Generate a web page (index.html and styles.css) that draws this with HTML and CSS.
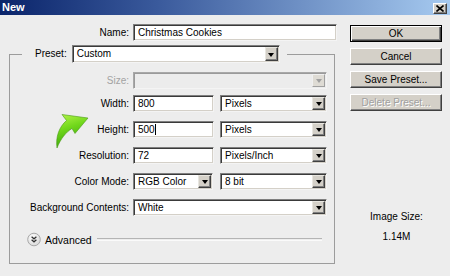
FILE: index.html
```html
<!DOCTYPE html>
<html>
<head>
<meta charset="utf-8">
<link rel="stylesheet" href="styles.css">
</head>
<body>
<div class="window">
  <div class="titlebar">
    <span class="title">New</span>
    <span class="close"><svg width="8" height="7" viewBox="0 0 8 7"><path d="M0.5 0.5 L7.5 6.5 M7.5 0.5 L0.5 6.5" stroke="#000" stroke-width="1.6"/></svg></span>
  </div>
  <div class="body">
    <div class="form">
      <div class="row name-row">
        <label class="lbl">Name:</label>
        <div class="input w-name">Christmas Cookies</div>
      </div>
      <fieldset class="group">
        <legend class="preset">
          <label class="preset-lbl">Preset:</label>
          <div class="select w-preset"><span class="val">Custom</span><span class="drop"><i class="tri"></i></span></div>
        </legend>
        <div class="row first">
          <label class="lbl off">Size:</label>
          <div class="select off w-full"><span class="val"></span><span class="drop"><i class="tri"></i></span></div>
        </div>
        <div class="row">
          <label class="lbl">Width:</label>
          <div class="pair">
            <div class="input w-num">800</div>
            <div class="select w-unit"><span class="val">Pixels</span><span class="drop"><i class="tri"></i></span></div>
          </div>
        </div>
        <div class="row">
          <label class="lbl">Height:</label>
          <div class="pair">
            <div class="input w-num">500<span class="caret"></span></div>
            <div class="select w-unit"><span class="val">Pixels</span><span class="drop"><i class="tri"></i></span></div>
          </div>
        </div>
        <div class="row">
          <label class="lbl">Resolution:</label>
          <div class="pair">
            <div class="input w-num">72</div>
            <div class="select w-unit"><span class="val">Pixels/Inch</span><span class="drop"><i class="tri"></i></span></div>
          </div>
        </div>
        <div class="row">
          <label class="lbl">Color Mode:</label>
          <div class="pair">
            <div class="select w-mode"><span class="val">RGB Color</span><span class="drop"><i class="tri"></i></span></div>
            <div class="select w-unit"><span class="val">8 bit</span><span class="drop"><i class="tri"></i></span></div>
          </div>
        </div>
        <div class="row">
          <label class="lbl">Background Contents:</label>
          <div class="select w-full"><span class="val">White</span><span class="drop"><i class="tri"></i></span></div>
        </div>
        <div class="advanced">
          <svg class="adv-icon" width="14" height="15" viewBox="0 0 14 15">
            <defs>
              <radialGradient id="ag" cx="0.4" cy="0.35" r="0.7">
                <stop offset="0" stop-color="#ffffff"/>
                <stop offset="1" stop-color="#d6d6d6"/>
              </radialGradient>
            </defs>
            <circle cx="7" cy="7.5" r="6.3" fill="url(#ag)" stroke="#a8a8a8" stroke-width="1"/>
            <path d="M4.6 4.8 L7 6.8 L9.4 4.8 M4.6 7.8 L7 9.8 L9.4 7.8" fill="none" stroke="#303030" stroke-width="1.3"/>
          </svg>
          <span class="adv-text">Advanced</span>
          <span class="rule"></span>
        </div>
      </fieldset>
    </div>
    <div class="side">
      <div class="btn default">OK</div>
      <div class="btn">Cancel</div>
      <div class="btn">Save Preset...</div>
      <div class="btn disabled">Delete Preset...</div>
      <div class="info">
        <div class="info-line">Image Size:</div>
        <div class="info-line">1.14M</div>
      </div>
    </div>
  </div>
  <svg class="arrow" width="46" height="42" viewBox="0 0 46 42">
    <defs>
      <linearGradient id="gg" x1="0" y1="0" x2="0.3" y2="1">
        <stop offset="0" stop-color="#b6f54a"/>
        <stop offset="0.45" stop-color="#72d81c"/>
        <stop offset="1" stop-color="#3aa50a"/>
      </linearGradient>
    </defs>
    <path d="M40 8 L14 4.5 L18.5 10.5 C11 17 7.5 27 9 38 C12.5 29 18 22 24 18.5 L27 23.5 Z" fill="url(#gg)" stroke="#4a9a18" stroke-width="0.6" stroke-linejoin="round"/>
  </svg>
</div>
</body>
</html>
```

FILE: styles.css
```css
html, body {
  margin: 0;
  padding: 0;
}
body {
  width: 450px;
  height: 276px;
  overflow: hidden;
  background: #ededed;
  font-family: "Liberation Sans", Arial, sans-serif;
  font-size: 10px;
  color: #000;
}
.window {
  position: relative;
  width: 450px;
  height: 276px;
  background: #ededed;
}
.titlebar {
  height: 15px;
  display: flex;
  align-items: center;
  justify-content: space-between;
  background: linear-gradient(to right, #0a246a 0%, #3a5a9c 35%, #a6caf0 100%);
  padding: 0 3px 0 2px;
  box-sizing: border-box;
}
.title {
  color: #fff;
  font-weight: bold;
  font-size: 11px;
  line-height: 15px;
}
.close {
  width: 14px;
  height: 11px;
  box-sizing: border-box;
  background: #d4d0c8;
  border: 1px solid;
  border-color: #fff #404040 #404040 #fff;
  box-shadow: inset -1px -1px 0 #808080;
  display: flex;
  align-items: center;
  justify-content: center;
  margin-top: 2px;
}
.close svg { display: block; }
.body {
  display: flex;
  align-items: flex-start;
}
.form {
  width: 335px;
}
.row {
  display: grid;
  grid-template-columns: 119px auto;
  column-gap: 4px;
  height: 17px;
  align-items: center;
  margin-top: 9px;
}
.row.first { margin-top: 0; }
.row.first + .row { margin-top: 6px; }
.name-row {
  grid-template-columns: 129px auto;
  margin-top: 9px;
}
.lbl {
  text-align: right;
  white-space: nowrap;
  line-height: 17px;
}
.lbl.off { color: #a3a3a3; }
.input, .select {
  box-sizing: border-box;
  height: 17px;
  background: #fff;
  border: 1px solid;
  border-color: #7f7f7f #f4f4f4 #f4f4f4 #7f7f7f;
  box-shadow: inset 1px 1px 0 #3a3a3a, inset -1px -1px 0 #d4d0c8;
  line-height: 15px;
  white-space: nowrap;
  overflow: hidden;
}
.input { padding-left: 4px; }
.caret {
  display: inline-block;
  width: 1px;
  height: 11px;
  background: #000;
  vertical-align: -2px;
}
.select {
  display: flex;
  align-items: stretch;
}
.select .val {
  flex: 1;
  padding-left: 4px;
}
.drop {
  width: 13px;
  margin: 1px 1px 1px 0;
  box-sizing: border-box;
  background: #d4d0c8;
  border: 1px solid;
  border-color: #e8e6e0 #404040 #404040 #e8e6e0;
  box-shadow: inset -1px -1px 0 #808080;
  display: flex;
  align-items: center;
  justify-content: center;
}
.tri {
  display: block;
  width: 0;
  height: 0;
  border-left: 3.5px solid transparent;
  border-right: 3.5px solid transparent;
  border-top: 4px solid #000;
  margin-top: 1px;
}
.select.off {
  background: #ececec;
  border-color: #a8a8a8 #f4f4f4 #f4f4f4 #a8a8a8;
  box-shadow: inset 1px 1px 0 #9a9a9a;
}
.select.off .drop {
  background: #dedbd4;
  border-color: #f0f0f0 #a0a0a0 #a0a0a0 #f0f0f0;
  box-shadow: none;
}
.select.off .tri { border-top-color: #a0a0a0; }
.w-name { width: 204px; }
.w-preset { width: 208px; }
.w-full { width: 194px; }
.w-num { width: 81px; }
.w-mode { width: 80px; }
.w-unit { width: 107px; }
.pair {
  display: flex;
  gap: 6px;
}
.pair .w-mode { margin-right: 1px; }
.group {
  margin: 4px 0 0 9px;
  padding: 9px 0 16px 0;
  width: 326px;
  box-sizing: border-box;
  border: 1px solid #9c9c9c;
  min-width: 0;
}
.preset {
  margin-left: 12px;
  padding: 0 7px 0 13px;
  display: flex;
  align-items: center;
  gap: 5px;
  height: 18px;
}
.preset .select { height: 18px; }
.preset-lbl { line-height: 18px; }
.advanced {
  display: flex;
  align-items: center;
  margin-top: 16px;
  padding-left: 17px;
  padding-right: 12px;
  height: 15px;
}
.adv-icon { display: block; }
.adv-text {
  margin-left: 4px;
  font-size: 10.5px;
}
.rule {
  flex: 1;
  margin-left: 5px;
  height: 1px;
  border-top: 1px solid #b4b4b4;
  border-bottom: 1px solid #fafafa;
}
.side {
  margin-left: 15px;
  padding-top: 10px;
  width: 92px;
  display: flex;
  flex-direction: column;
  gap: 6px;
}
.btn {
  box-sizing: border-box;
  height: 17px;
  background: #d4d0c8;
  border: 1px solid;
  border-color: #fff #404040 #404040 #fff;
  box-shadow: inset -1px -1px 0 #808080;
  text-align: center;
  line-height: 15px;
  white-space: nowrap;
}
.btn.default {
  border: 1px solid #000;
  box-shadow: inset 1px 1px 0 #fff, inset -1px -1px 0 #404040, inset -2px -2px 0 #808080;
}
.btn.disabled {
  color: #a0a0a0;
  text-shadow: 1px 1px 0 #fff;
}
.info {
  margin-top: 93px;
  text-align: center;
}
.info-line {
  line-height: 13px;
  margin-bottom: 7px;
  padding-left: 1px;
}
.arrow {
  position: absolute;
  left: 48px;
  top: 110px;
}
```
